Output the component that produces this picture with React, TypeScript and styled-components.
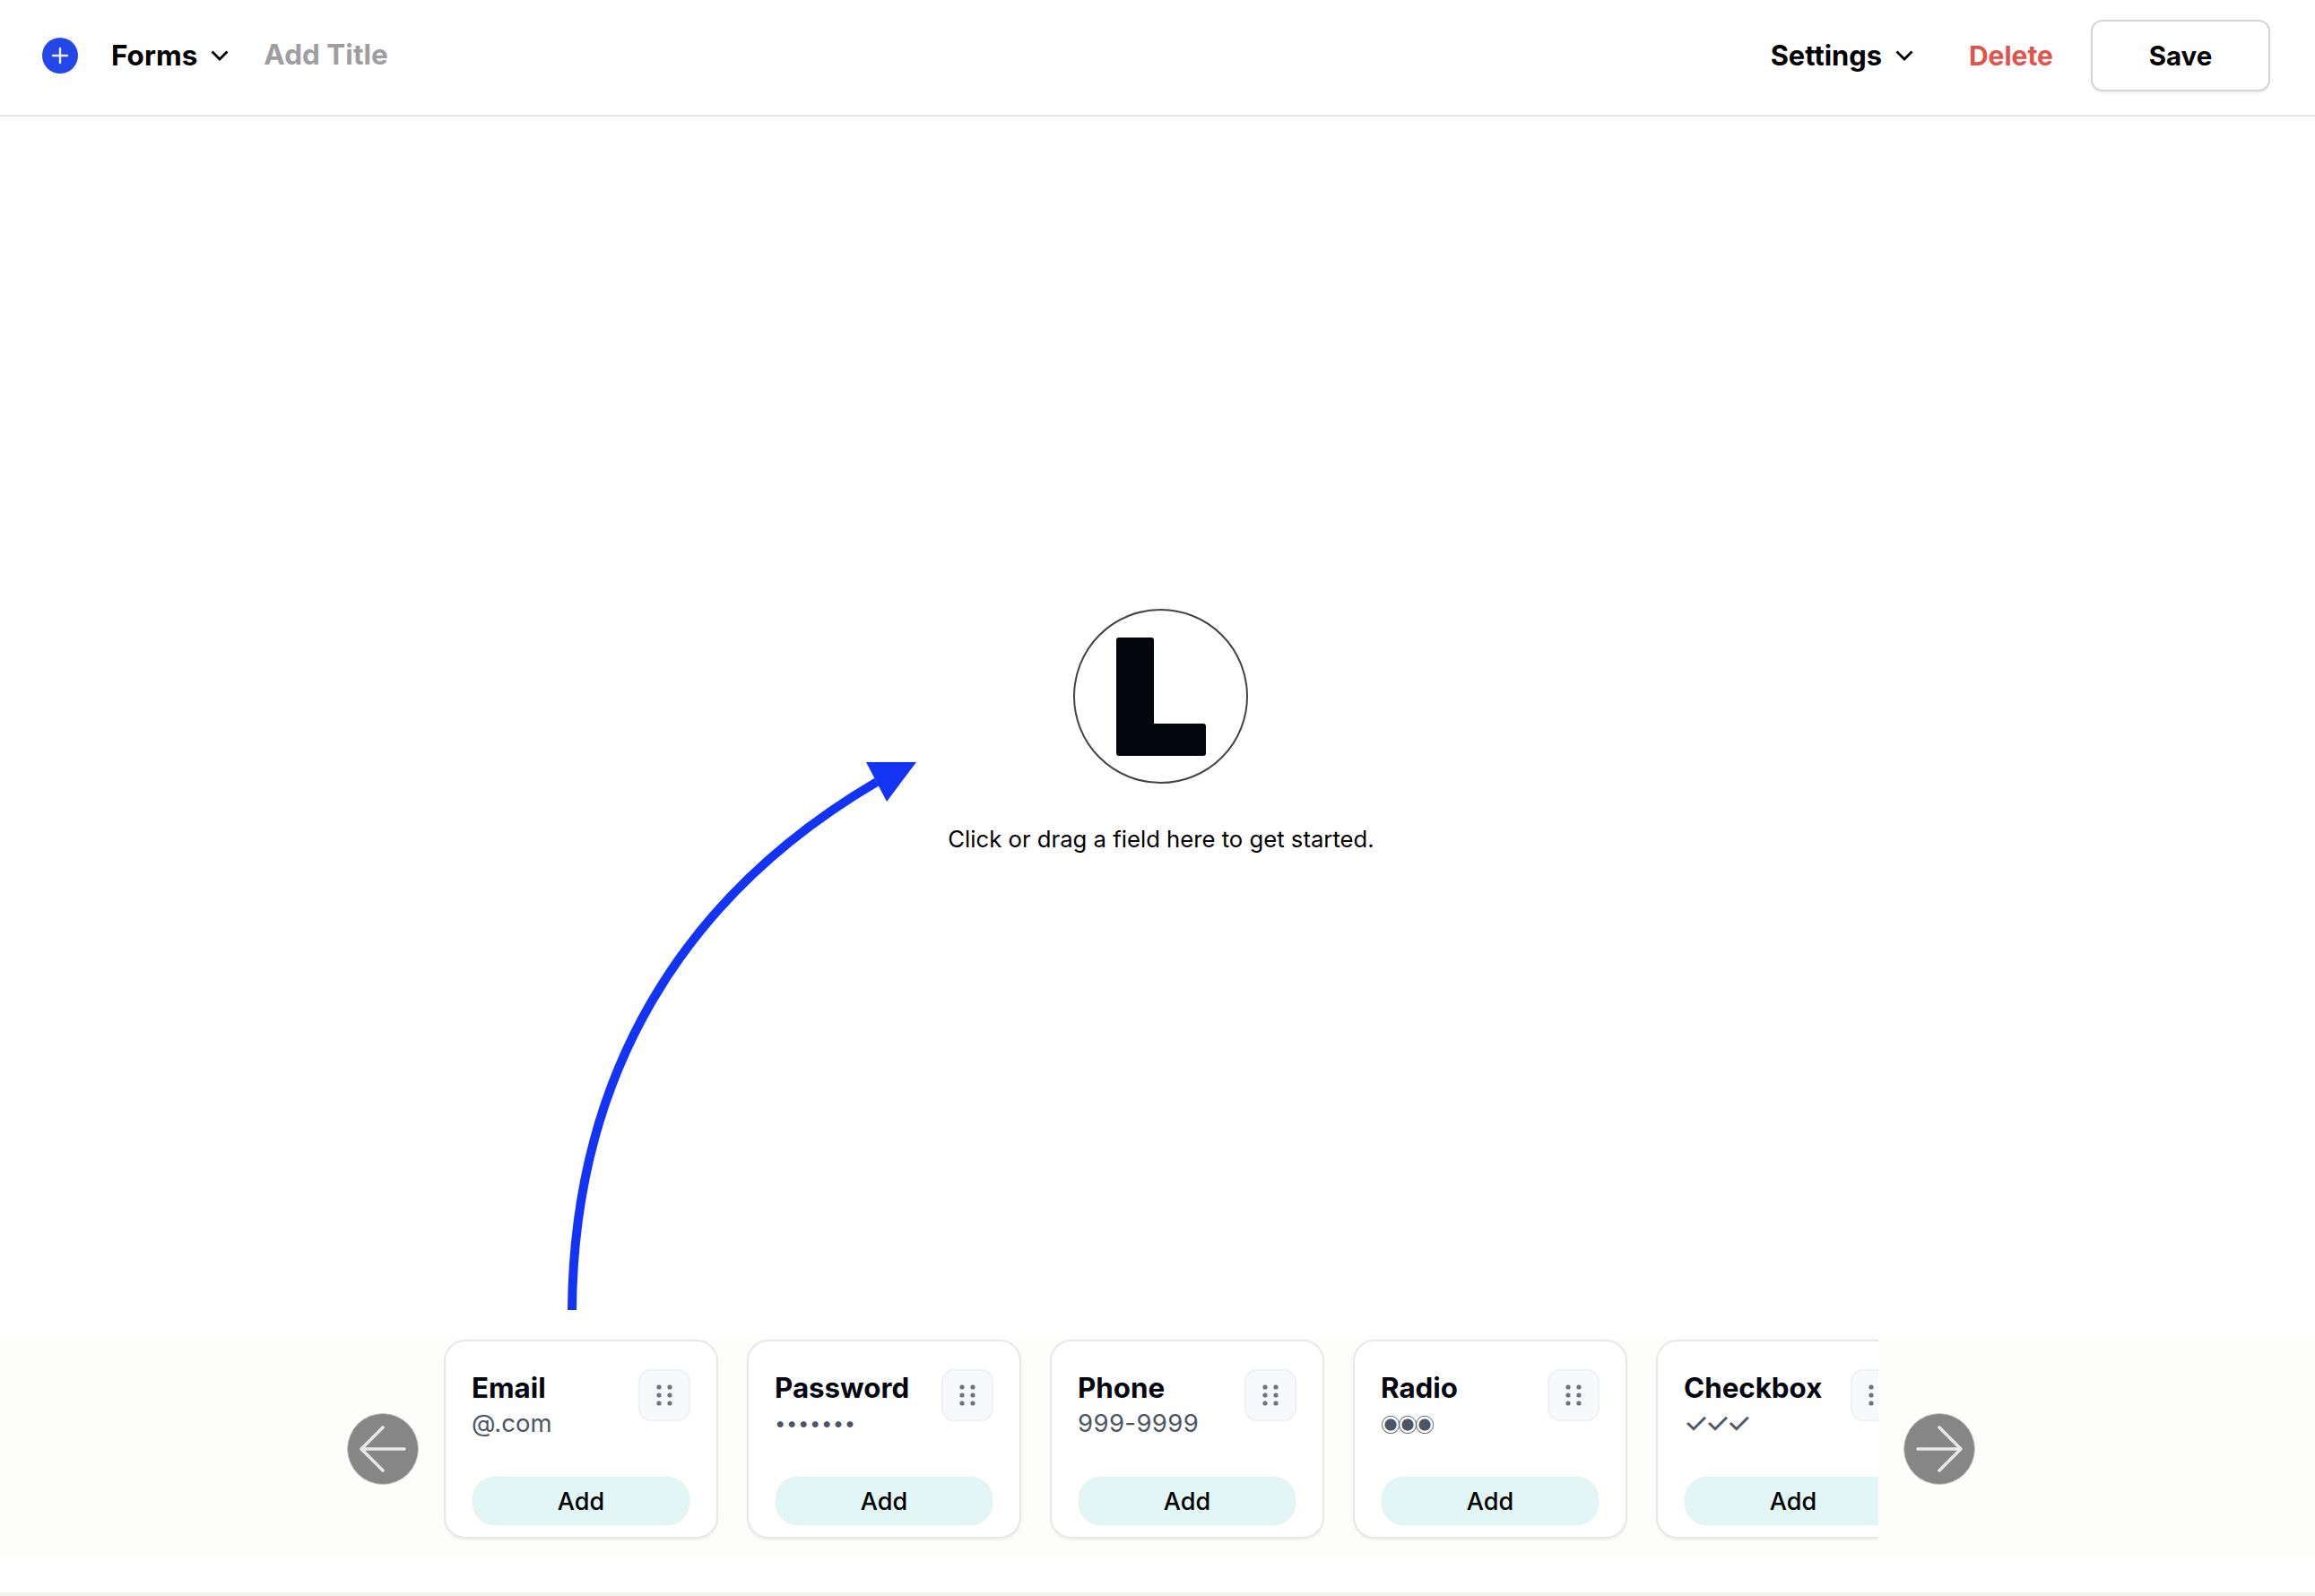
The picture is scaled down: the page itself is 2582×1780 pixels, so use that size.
import React from "react";
import styled, { createGlobalStyle } from "styled-components";

const Global = createGlobalStyle`
  html, body { margin: 0; padding: 0; background: #fff; }
  body { font-family: Inter, "Liberation Sans", sans-serif; color: #000; }
  * { box-sizing: border-box; }
`;

const Page = styled.div`
  position: relative;
  height: 1780px;
  width: 2582px;
  display: flex;
  flex-direction: column;
  overflow: hidden;
  background: #fff;
`;

const Header = styled.header`
  height: 130px;
  flex: none;
  display: flex;
  align-items: center;
  justify-content: space-between;
  padding: 0 50px 4px 47px;
  border-bottom: 2px solid #e5e5e5;
`;

const Group = styled.div`
  display: flex;
  align-items: center;
`;

const PlusBadge = styled.span`
  width: 40px;
  height: 40px;
  border-radius: 50%;
  background: #2347e9;
  display: flex;
  align-items: center;
  justify-content: center;
  margin-right: 37px;
`;

const MenuLabel = styled.span<{ $size?: number }>`
  font-size: ${(p) => p.$size ?? 30.8}px;
  font-weight: 700;
  line-height: 40px;
  color: #000;
`;

const Chevron = styled.svg`
  width: 20px;
  height: 12px;
  margin-left: 15px;
  flex: none;
`;

const TitleLabel = styled.span`
  font-size: 31.5px;
  font-weight: 700;
  line-height: 40px;
  color: #9e9e9e;
  margin-left: 39px;
  margin-top: -3px;
`;

const DeleteLabel = styled.span`
  font-size: 30px;
  font-weight: 700;
  line-height: 40px;
  color: #e0544c;
  margin-left: 62px;
  margin-right: 42px;
`;

const SaveButton = styled.button`
  width: 200px;
  height: 80px;
  border: 2px solid #d4d4d4;
  border-radius: 13px;
  background: #fff;
  box-shadow: 0 2px 3px rgba(0, 0, 0, 0.06);
  font: 700 29.5px Inter, sans-serif;
  color: #000;
`;

const Canvas = styled.main`
  flex: 1;
  display: flex;
  flex-direction: column;
  align-items: center;
  padding-top: 549px;
`;

const LogoRing = styled.div`
  width: 195px;
  height: 195px;
  border: 2px solid #444;
  border-radius: 50%;
  display: flex;
  align-items: center;
  justify-content: center;
  margin-left: 7px;
`;

const Hint = styled.p`
  margin: 44px 0 0 8px;
  font-size: 25.7px;
  line-height: 36px;
  color: #000;
`;

const ArrowLayer = styled.svg`
  position: absolute;
  left: 0;
  top: 0;
  width: 2582px;
  height: 1780px;
  pointer-events: none;
`;

const Tray = styled.section`
  flex: none;
  height: 243px;
  margin-bottom: 40px;
  background: #fdfdfb;
  display: flex;
  align-items: flex-start;
  padding-left: 387px;
`;

const FooterRule = styled.div`
  flex: none;
  height: 4px;
  background: #f3f3ee;
`;

const RoundNav = styled.button`
  width: 80px;
  height: 80px;
  flex: none;
  margin-top: 83px;
  padding: 0;
  border: 1px solid #ccc;
  border-radius: 50%;
  background: #868686;
  display: flex;
  align-items: center;
  justify-content: center;
`;

const Viewport = styled.div`
  width: 1600px;
  margin: 1px 28px 0 28px;
  height: 226px;
  overflow: hidden;
  display: flex;
  gap: 32px;
`;

const Card = styled.article`
  width: 306px;
  height: 222px;
  flex: none;
  background: #fff;
  border: 2px solid #e8e8e8;
  border-radius: 24px;
  box-shadow: 0 2px 3px rgba(0, 0, 0, 0.05);
  padding: 32px 29px 13px 29px;
  display: flex;
  flex-direction: column;
  justify-content: space-between;
`;

const CardTop = styled.div`
  display: flex;
  justify-content: space-between;
  align-items: flex-start;
`;

const CardTitle = styled.h3`
  margin: 0;
  font-size: 31.3px;
  line-height: 40px;
  font-weight: 700;
  color: #03060f;
`;

const CardSample = styled.div<{ $size?: number; $spacing?: number; $stroke?: number; $family?: string }>`
  font-size: ${(p) => p.$size ?? 27.5}px;
  letter-spacing: ${(p) => p.$spacing ?? 0}px;
  -webkit-text-stroke: ${(p) => p.$stroke ?? 0}px #4b5563;
  font-family: ${(p) => p.$family ?? "inherit"};
  line-height: 36px;
  height: 36px;
  padding-top: 1px;
  color: #4b5563;
  white-space: nowrap;
`;

const Handle = styled.div`
  width: 58px;
  height: 58px;
  flex: none;
  margin-top: -1px;
  background: #f8f9fb;
  border: 2px solid #f0f1f4;
  border-radius: 14px;
  display: flex;
  align-items: center;
  justify-content: center;
`;

const AddButton = styled.button`
  height: 54px;
  width: 242px;
  margin-left: 1px;
  flex: none;
  border: 1px solid #e0f2f1;
  border-radius: 24px;
  background: #e2f6f5;
  font: 500 27px Inter, sans-serif;
  color: #000;
  padding: 0;
`;

const fields = [
  { name: "Email", sample: "@.com" },
  { name: "Password", sample: "•••••••", size: 22, spacing: 0.6 },
  { name: "Phone", sample: "999-9999", spacing: 0.4 },
  { name: "Radio", sample: "◉◉◉", size: 22, spacing: -3, family: '"Noto Sans CJK JP", sans-serif' },
  { name: "Checkbox", sample: "✓✓✓", size: 31, spacing: -3.5, stroke: 0.3 },
];

const Dots = () => (
  <svg width="18" height="24" viewBox="0 0 18 24" fill="#6b7280">
    {[3, 12, 21].map((y) =>
      [3, 15].map((x) => <circle key={`${x}-${y}`} cx={x} cy={y} r="2.6" />)
    )}
  </svg>
);

const Down = () => (
  <Chevron viewBox="0 0 20 12" fill="none" stroke="#000" strokeWidth="2.8">
    <path d="M1.5 1.5 10 10 18.5 1.5" />
  </Chevron>
);

const NavArrow = ({ right }: { right?: boolean }) => (
  <svg width="54" height="54" viewBox="0 0 54 54" fill="none" stroke="#e8e8e8" strokeWidth="3.6" strokeLinecap="round" strokeLinejoin="round">
    {right ? <path d="M3 27H51M27 3 51 27 27 51" /> : <path d="M51 27H3M27 3 3 27 27 51" />}
  </svg>
);

export default function App() {
  return (
    <Page>
      <Global />
      <Header>
        <Group>
          <PlusBadge>
            <svg width="20" height="20" viewBox="0 0 20 20" stroke="#eef" strokeWidth="2.4" strokeLinecap="round">
              <path d="M10 2v16M2 10h16" />
            </svg>
          </PlusBadge>
          <MenuLabel $size={31.5}>Forms</MenuLabel>
          <Down />
          <TitleLabel>Add Title</TitleLabel>
        </Group>
        <Group>
          <MenuLabel>Settings</MenuLabel>
          <Down />
          <DeleteLabel>Delete</DeleteLabel>
          <SaveButton>Save</SaveButton>
        </Group>
      </Header>
      <Canvas>
        <LogoRing>
          <svg width="100" height="132" viewBox="0 0 100 132">
            <path
              d="M3 0H39a3 3 0 0 1 3 3V96H97a3 3 0 0 1 3 3V129a3 3 0 0 1-3 3H3a3 3 0 0 1-3-3V3a3 3 0 0 1 3-3Z"
              fill="#03060f"
            />
          </svg>
        </LogoRing>
        <Hint>Click or drag a field here to get started.</Hint>
      </Canvas>
      <ArrowLayer viewBox="0 0 2582 1780">
        <path d="M638 1461C640 1200 760 1000 978 872" fill="none" stroke="#1434f5" strokeWidth="10" />
        <path d="M966 850H1022L989 894Z" fill="#1434f5" />
      </ArrowLayer>
      <Tray>
        <RoundNav><NavArrow /></RoundNav>
        <Viewport>
          {fields.map((f) => (
            <Card key={f.name}>
              <CardTop>
                <div>
                  <CardTitle>{f.name}</CardTitle>
                  <CardSample $size={f.size} $spacing={f.spacing} $stroke={f.stroke} $family={f.family}>{f.sample}</CardSample>
                </div>
                <Handle><Dots /></Handle>
              </CardTop>
              <AddButton>Add</AddButton>
            </Card>
          ))}
        </Viewport>
        <RoundNav><NavArrow right /></RoundNav>
      </Tray>
      <FooterRule />
    </Page>
  );
}
